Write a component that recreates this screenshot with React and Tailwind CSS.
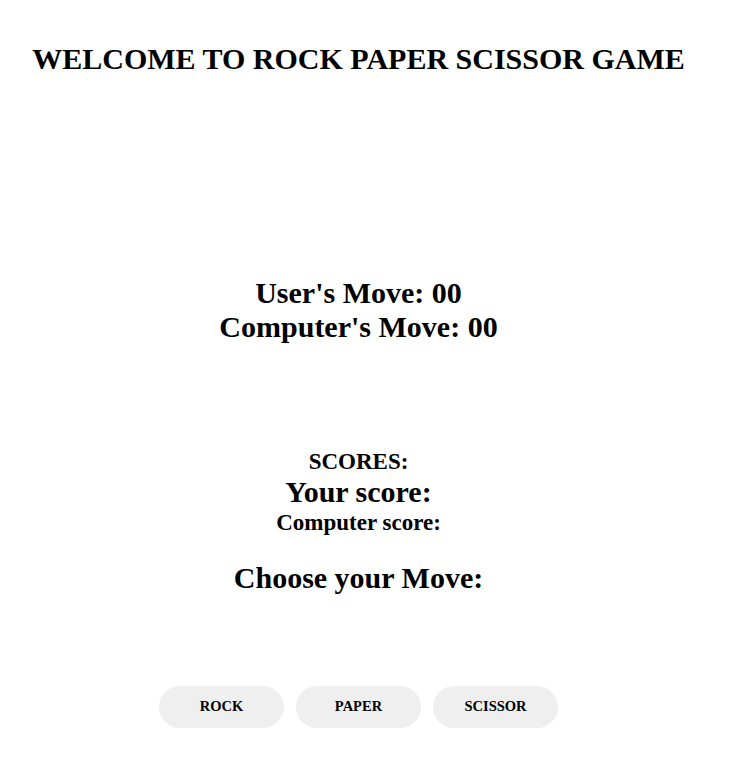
import React, { useState } from 'react';

const moves = ['ROCK', 'PAPER', 'SCISSOR'];

const App = () => {
    const [userMove, setUserMove] = useState('00');
    const [compMove, setCompMove] = useState('00');

    const play = (move) => {
        setUserMove(move);
        setCompMove(moves[Math.floor(Math.random() * 3)]);
    };

    return (
        <div className="w-[717px] min-h-[777px] bg-white text-black text-center font-bold font-['Liberation_Serif',serif]">
            <h1 className="pt-[41px] text-[30px] leading-[36px]">WELCOME TO ROCK PAPER SCISSOR GAME</h1>

            {/* moves */}
            <div className="mt-[199px] text-[30px] leading-[34px]">
                <div>User's Move: {userMove}</div>
                <div>Computer's Move: {compMove}</div>
            </div>

            {/* scores */}
            <div className="mt-[105px]">
                <div className="text-[23px] leading-[26px]">SCORES:</div>
                <div className="text-[30px] leading-[34px]">Your score:</div>
                <div className="text-[23px] leading-[28px]">Computer score:</div>
            </div>

            <div className="mt-[24px] text-[30px] leading-[34px]">Choose your Move:</div>

            <div className="mt-[91px] flex justify-center gap-[12px]">
                {moves.map((m) => (
                    <button
                        key={m}
                        onClick={() => play(m)}
                        className="w-[125px] h-[42px] rounded-full bg-[#efefef] text-[14.5px] font-bold"
                    >
                        {m}
                    </button>
                ))}
            </div>
        </div>
    );
};

export default App;
